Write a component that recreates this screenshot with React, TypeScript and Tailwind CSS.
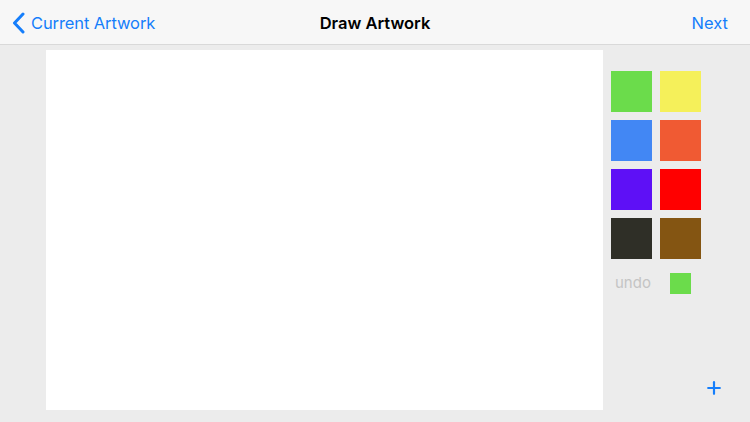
import { Plus } from "lucide-react";

const colors = [
  "#6bdc4b",
  "#f5f05a",
  "#4287f4",
  "#f05a33",
  "#5e10f6",
  "#ff0000",
  "#2f2f27",
  "#845512",
];

export default function App() {
  return (
    <div
      className="w-[750px] h-[422px] bg-[#ececec] flex flex-col overflow-hidden"
      style={{ fontFamily: 'Inter, "Liberation Sans", Arial, sans-serif' }}
    >
      <header className="h-[45px] shrink-0 bg-[#f7f7f7] border-b border-[#d9d9d9] flex items-center relative pt-[2px] text-[16.5px]">
        <div className="flex items-center pl-[12px] text-[#157efb] tracking-[-0.1px]">
          <svg width="13" height="22" viewBox="0 0 13 22" className="mr-[6px]">
            <path d="M11 2 L2.5 11 L11 20" fill="none" stroke="#157efb" strokeWidth="3" strokeLinecap="round" strokeLinejoin="round" />
          </svg>
          <span>Current Artwork</span>
        </div>
        <div className="absolute left-0 right-0 text-center font-semibold text-black pointer-events-none">
          Draw Artwork
        </div>
        <div className="ml-auto pr-[22px] text-[#157efb]">Next</div>
      </header>
      <div className="flex flex-1">
        <div className="ml-[46px] mt-[5px] w-[557px] h-[360px] bg-white" />
        <div className="flex flex-col flex-1 pl-[8px] pt-[26px]">
          <div className="grid grid-cols-[41px_41px] gap-x-[8px] gap-y-[8px]">
            {colors.map((c) => (
              <div key={c} className="w-[41px] h-[41px]" style={{ backgroundColor: c }} />
            ))}
          </div>
          <div className="flex items-center mt-[13px]">
            <span className="pl-[4px] text-[15px] text-[#c4c4c4] w-[59px]">undo</span>
            <div className="w-[21px] h-[21px] bg-[#6bdc4b]" />
          </div>
          <div className="flex justify-end mt-auto mb-[24px] pr-[26px]">
            <Plus size={20} strokeWidth={2.6} color="#157efb" />
          </div>
        </div>
      </div>
    </div>
  );
}
